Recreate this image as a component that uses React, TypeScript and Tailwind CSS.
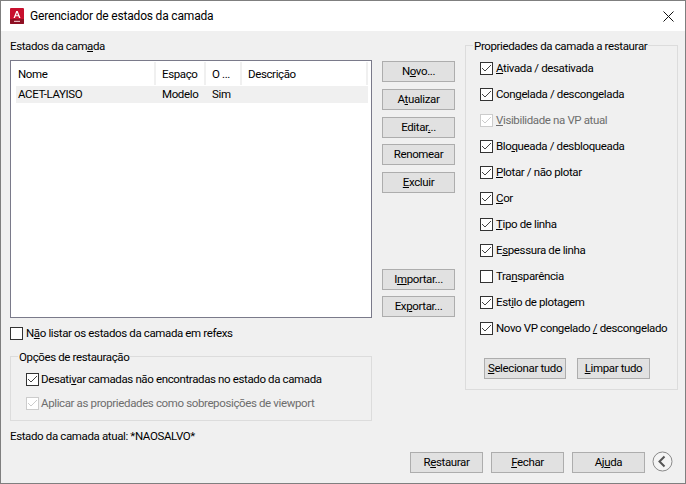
import React from "react";

const Btn = ({ children, w = "w-[73px]" }: { children: React.ReactNode; w?: string }) => (
  <button className={`${w} h-[21px] shrink-0 border border-[#adadad] bg-[#e1e1e1] flex items-center justify-center text-[11.5px] tracking-[-0.37px] leading-none text-black whitespace-nowrap`}>
    <span>{children}</span>
  </button>
);

const Check = ({ checked = true, disabled = false, gap = "mr-[2px]", children }: { checked?: boolean; disabled?: boolean; gap?: string; children: React.ReactNode }) => (
  <div className={`flex items-center h-[16px] whitespace-nowrap ${disabled ? "text-[#6d6d6d]" : "text-black"}`}>
    <span className={`w-[13px] h-[13px] shrink-0 border ${disabled ? "border-[#cccccc]" : "border-[#333333]"} bg-white flex items-center justify-center ${gap}`}>
      {checked && (
        <svg width="11" height="11" viewBox="0 0 11 11" fill="none">
          <path d="M1 5 L4 8 L10 2" stroke={disabled ? "#cccccc" : "#444444"} strokeWidth="1" />
        </svg>
      )}
    </span>
    <span className="pt-[2px]">{children}</span>
  </div>
);

const Group = ({ title, className, children }: { title: string; className: string; children: React.ReactNode }) => (
  <div className={`relative border border-[#dcdcdc] ${className}`}>
    <span className="absolute left-[7px] top-[-8px] h-[16px] bg-[#f0f0f0] px-[1px] leading-[16px] whitespace-nowrap text-black">{title}</span>
    {children}
  </div>
);

export default function App() {
  return (
    <div className="w-[686px] h-[484px] flex flex-col border border-[#7f7f7f] bg-[#f0f0f0] text-black overflow-hidden font-['Roboto',sans-serif] text-[11.5px] tracking-[-0.37px]">
      <div className="h-[30px] shrink-0 bg-white flex items-center pl-[9px]">
        <svg width="14" height="16" viewBox="0 0 14 16" className="mr-[6px]">
          <path d="M1 0 H13 Q14 0 14 1 V15 Q14 16 13 16 H1 Q0 16 0 15 V1 Q0 0 1 0 Z" fill="#c8102e" />
          <path d="M0 11 H14 V15 Q14 16 13 16 H1 Q0 16 0 15 Z" fill="#8e1023" />
          <path d="M3.5 10 L6.3 3 H7.7 L10.5 10 H9 L8.4 8.3 H5.6 L5 10 Z M6 7.2 H8 L7 4.5 Z" fill="#fff" fillRule="evenodd" />
          <rect x="4" y="12.8" width="6" height="1.2" fill="#e8b4bc" />
        </svg>
        <span className="text-[12px] tracking-[-0.18px]">Gerenciador de estados da camada</span>
        <svg width="11" height="11" viewBox="0 0 11 11" className="ml-auto mr-[11px]">
          <path d="M0.5 0.5 L10.5 10.5 M10.5 0.5 L0.5 10.5" stroke="#111" strokeWidth="1" />
        </svg>
      </div>

      <div className="flex-1 flex pl-[9px] pt-[5px]">
        <div className="w-[362px] flex flex-col shrink-0">
          <div className="h-[16px] leading-[16px] mt-[2px]">Estados da cam<u>a</u>da</div>
          <div className="mt-[6px] h-[258px] border border-[#7a7a8a] bg-white pl-[5px] pr-[3px] pt-[1px]">
            <div className="h-[24px] flex items-center border-b border-transparent">
              <div className="w-[140px] h-full pl-[2px] pt-[2px] flex items-center border-r-2 border-[#f0f0f0]">Nome</div>
              <div className="w-[50px] h-full pl-[6px] pt-[2px] flex items-center border-r-2 border-[#f0f0f0]">Espaço</div>
              <div className="w-[36px] h-full pl-[6px] pt-[2px] flex items-center border-r-2 border-[#f0f0f0]">O ...</div>
              <div className="flex-1 h-full pl-[6px] pt-[2px] flex items-center border-r-2 border-[#f0f0f0]">Descrição</div>
            </div>
            <div className="h-[17px] bg-[#f0f0f0] flex items-center">
              <div className="w-[140px] pl-[2px]">ACET-LAYISO</div>
              <div className="w-[50px] pl-[6px]">Modelo</div>
              <div className="w-[36px] pl-[6px]">Sim</div>
            </div>
          </div>
          <div className="mt-[7px]">
            <Check checked={false} gap="mr-[3px]">N<u>ã</u>o listar os estados da camada em refexs</Check>
          </div>
          <Group title="Opções de restauração" className="mt-[15px] h-[65px] pl-[15px] pt-[14px]">
            <Check>Desati<u>v</u>ar camadas não encontradas no estado da camada</Check>
            <div className="mt-[8px]">
              <Check disabled>Aplicar as propriedades como sobreposições de viewport</Check>
            </div>
          </Group>
          <div className="mt-[7px] h-[16px] leading-[16px]">Estado da camada atual: *NAOSALVO*</div>
        </div>

        <div className="w-[73px] ml-[10px] shrink-0 flex flex-col pt-[25px]">
          <div className="flex flex-col gap-[7px]">
            <Btn>N<u>o</u>vo...</Btn>
            <Btn>A<u>t</u>ualizar</Btn>
            <Btn>Editar<u>.</u>..</Btn>
            <div className="-mt-px"><Btn>Renomear</Btn></div>
            <Btn><u>E</u>xcluir</Btn>
          </div>
          <div className="mt-[76px] flex flex-col gap-[6px]">
            <Btn>I<u>m</u>portar...</Btn>
            <Btn>Ex<u>p</u>ortar...</Btn>
          </div>
        </div>

        <div className="ml-[10px] w-[213px] shrink-0 flex flex-col">
          <Group title="Propriedades da camada a restaurar" className="mt-[9px] h-[345px] pl-[14px] pt-[14px]">
            <div className="flex flex-col gap-[10px]">
              <Check gap="mr-[3px]"><u>A</u>tivada / desativada</Check>
              <Check gap="mr-[3px]">Con<u>g</u>elada / descongelada</Check>
              <Check gap="mr-[3px]" disabled><u>V</u>isibilidade na VP atual</Check>
              <Check gap="mr-[3px]">Blo<u>q</u>ueada / desbloqueada</Check>
              <Check gap="mr-[3px]"><u>P</u>lotar / não plotar</Check>
              <Check gap="mr-[3px]"><u>C</u>or</Check>
              <Check gap="mr-[3px]"><u>T</u>ipo de linha</Check>
              <Check gap="mr-[3px]">E<u>s</u>pessura de linha</Check>
              <Check gap="mr-[3px]" checked={false}>Tra<u>n</u>sparência</Check>
              <Check gap="mr-[3px]">Est<u>i</u>lo de plotagem</Check>
              <Check gap="mr-[3px]">Novo VP congelado <u>/</u> descongelado</Check>
            </div>
            <div className="flex mt-[22px] ml-[4px] gap-[11px]">
              <Btn w="w-[82px]"><u>S</u>elecionar tudo</Btn>
              <Btn><u>L</u>impar tudo</Btn>
            </div>
          </Group>
          <div className="flex-1" />
        </div>
      </div>

      <div className="h-[31px] shrink-0 flex pl-[409px] gap-[8px] relative">
        <Btn>R<u>e</u>staurar</Btn>
        <Btn><u>F</u>echar</Btn>
        <Btn>Aj<u>u</u>da</Btn>
        <svg width="21" height="21" viewBox="0 0 21 21" className="-ml-[1px] -mt-[1px]">
          <circle cx="10.5" cy="10.5" r="9.5" fill="#f4f4f4" stroke="#8a8a8a" strokeWidth="1" />
          <path d="M12.5 5.5 L7.5 10.5 L12.5 15.5" fill="none" stroke="#555" strokeWidth="2" />
        </svg>
      </div>
    </div>
  );
}
